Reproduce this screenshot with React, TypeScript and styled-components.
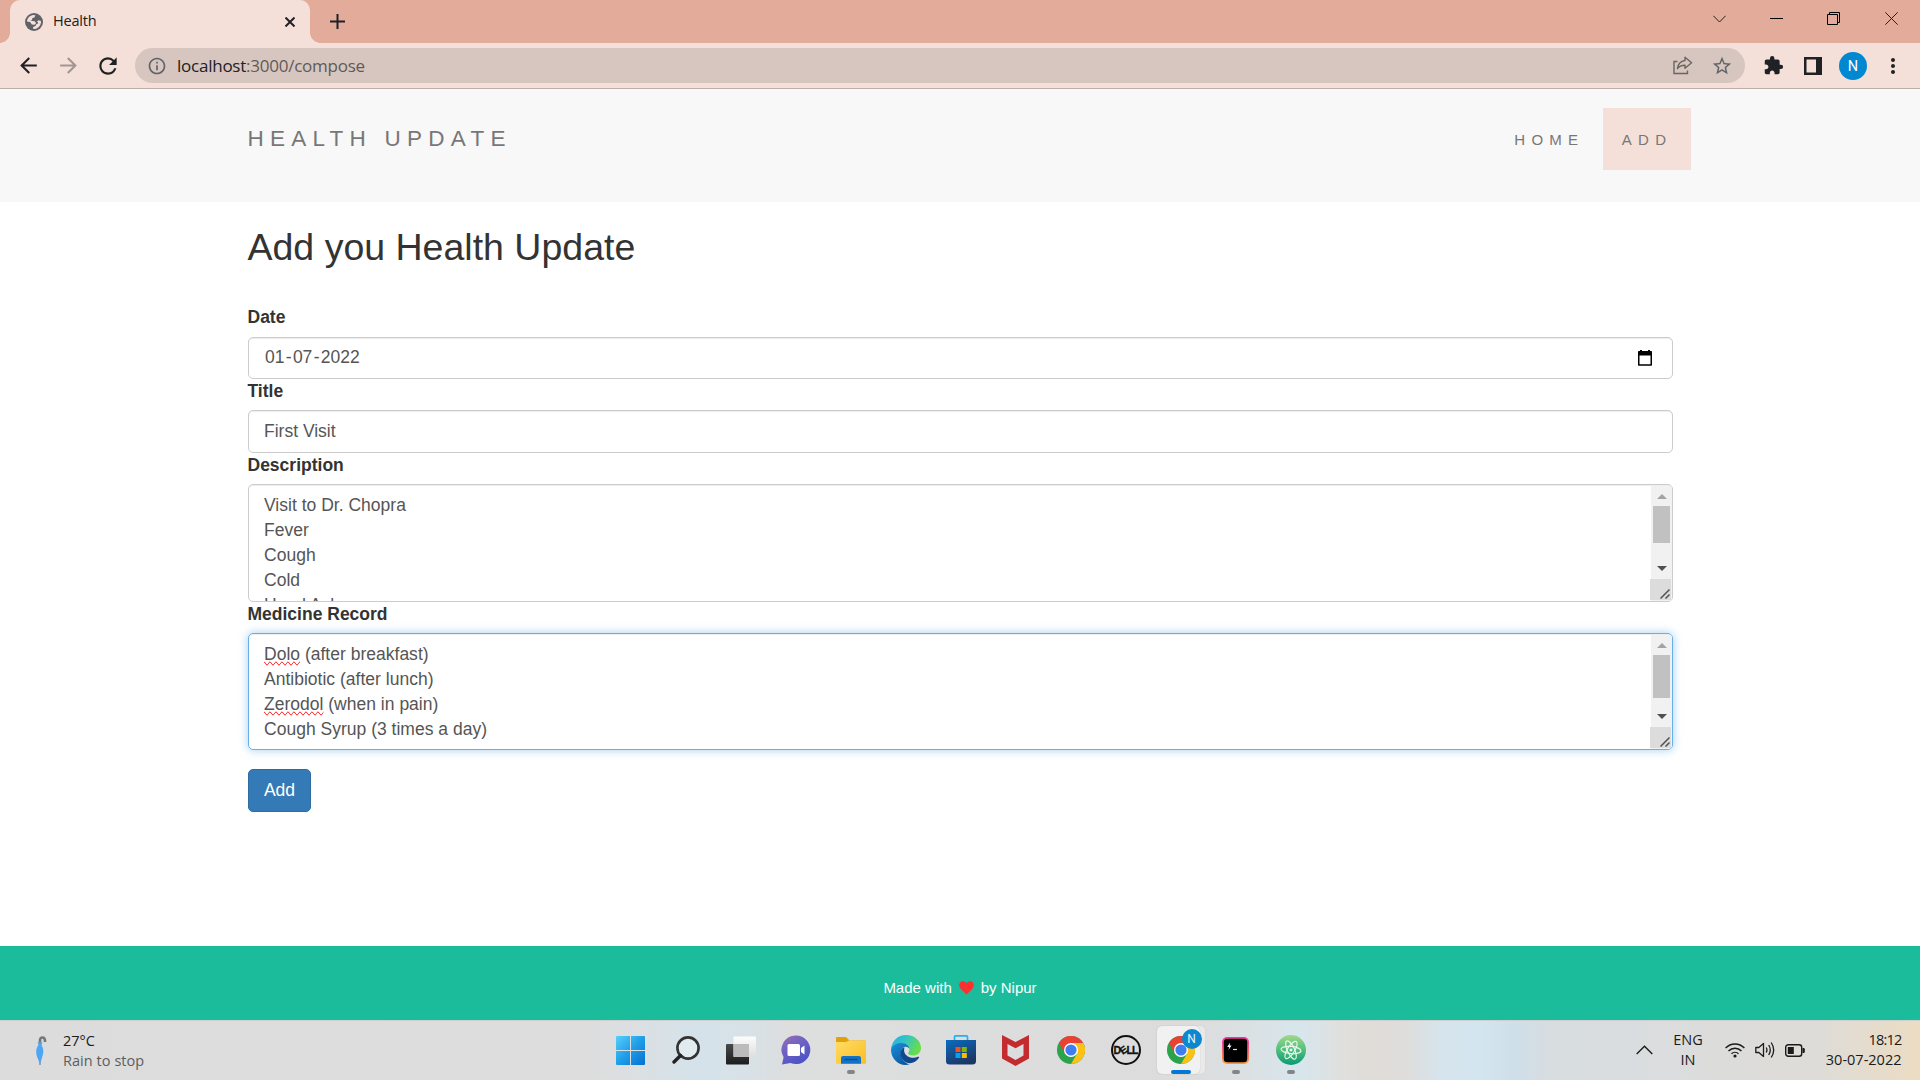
import React from "react";
import styled, { createGlobalStyle, css } from "styled-components";
import {
  MdArrowBack,
  MdArrowForward,
  MdRefresh,
  MdInfoOutline,
  MdStarBorder,
  MdExtension,
  MdMoreVert,
} from "react-icons/md";

const uiFont = '"Open Sans", "Noto Sans", sans-serif';
const pageFont = '"Liberation Sans", Arial, sans-serif';

const GlobalStyle = createGlobalStyle`
  *, *::before, *::after { box-sizing: border-box; }
  body { margin: 0; overflow: hidden; background: #fff; }
  svg { display: block; flex: none; }
`;

const Screen = styled.div`
  display: flex;
  flex-direction: column;
  width: 1920px;
  height: 1080px;
  font-family: ${uiFont};
`;

/* ---------- browser chrome ---------- */

const TabStrip = styled.header`
  display: flex;
  flex: none;
  height: 43px;
  padding-left: 10px;
  background: #e3ab99;
`;

const Tab = styled.div`
  position: relative;
  display: flex;
  align-items: center;
  width: 300px;
  padding: 0 15px 0 15px;
  border-radius: 10px 10px 0 0;
  background: #f5e0d9;
  color: #202124;
  font-size: 14.5px;
  letter-spacing: -0.2px;

  &::before,
  &::after {
    content: "";
    position: absolute;
    bottom: 0;
    width: 10px;
    height: 10px;
  }
  &::before {
    left: -10px;
    background: radial-gradient(circle at 0 0, transparent 9.5px, #f5e0d9 10px);
  }
  &::after {
    right: -10px;
    background: radial-gradient(circle at 100% 0, transparent 9.5px, #f5e0d9 10px);
  }
`;

const TabTitle = styled.span`
  flex: 1;
  margin: 0 0 2px 10px;
  line-height: 20px;
`;

const NewTab = styled.div`
  display: flex;
  align-items: center;
  padding-left: 20px;
`;

const WindowControls = styled.div`
  display: flex;
  margin-left: auto;
  height: 37px;
  align-items: center;
`;

const WindowControl = styled.div`
  display: flex;
  align-items: center;
  justify-content: center;
  width: 57.4px;
`;

const Toolbar = styled.div`
  display: flex;
  flex: none;
  align-items: center;
  height: 46px;
  padding-left: 8px;
  border-bottom: 1px solid #bdaeaa;
  background: #f5e0d9;
  color: #202124;
`;

const ToolButton = styled.div<{ $dim?: boolean }>`
  display: flex;
  flex: none;
  justify-content: center;
  align-items: center;
  width: 40px;
  color: ${(p) => (p.$dim ? "#a09593" : "#202124")};
`;

const NavButtons = styled.div`
  display: flex;
  flex: none;
  width: 127px;
`;

const AddressBar = styled.div`
  display: flex;
  flex: none;
  align-items: center;
  width: 1610px;
  height: 35px;
  padding: 0 12px 0 12px;
  border-radius: 18px;
  background: #d7c6bf;
  color: #5f6368;
`;

const Url = styled.div`
  flex: 1;
  margin-left: 10px;
  font-size: 17px;
  line-height: 24px;
  letter-spacing: -0.24px;
  color: #5f5a59;
`;

const Host = styled.span`
  color: #202124;
`;

const AddressActions = styled.div`
  display: flex;
  align-items: center;
  gap: 18px;
`;

const Extensions = styled.div`
  display: flex;
  flex: none;
  margin-left: 8px;
`;

const Avatar = styled.div`
  display: flex;
  align-items: center;
  justify-content: center;
  width: 28px;
  height: 28px;
  padding-top: 1px;
  border-radius: 50%;
  background: #0288d1;
  color: #fff;
  font: 14.5px Roboto, sans-serif;
`;

/* ---------- page ---------- */

const Page = styled.div`
  display: flex;
  flex-direction: column;
  flex: 1;
  font-family: ${pageFont};
  font-size: 17.5px;
  line-height: 25px;
  color: #333;
`;

const Navbar = styled.nav`
  display: flex;
  flex: none;
  align-items: flex-start;
  justify-content: space-between;
  height: 113px;
  padding: 19px 229px 0 247.5px;
  background: #f8f8f8;
  color: #777;
`;

const Brand = styled.div`
  padding-top: 17.5px;
  font-size: 22.5px;
  letter-spacing: 6.25px;
`;

const NavLinks = styled.div`
  display: flex;
`;

const NavLink = styled.a<{ $active?: boolean }>`
  height: 62px;
  padding: 19px 18.75px;
  font-size: 15px;
  letter-spacing: 6.25px;
  background: ${(p) => (p.$active ? "#f5e0d9" : "transparent")};
`;

const Content = styled.main`
  flex: 1;
  width: 1425px;
  margin-left: 248px;
`;

const Heading = styled.h1`
  margin: 25px 0 37px -0.5px;
  font-size: 37.5px;
  font-weight: 400;
  line-height: 41px;
`;

const Label = styled.label`
  display: block;
  height: 25px;
  margin: 0 0 6px -0.5px;
  font-weight: 700;

  &:first-of-type {
    margin-bottom: 7px;
  }
`;

const fieldFrame = css<{ $focus?: boolean }>`
  border: 1px solid ${(p) => (p.$focus ? "#66afe9" : "#ccc")};
  border-radius: 5px;
  box-shadow: ${(p) =>
    p.$focus
      ? "inset 0 1px 1px rgba(0,0,0,.075), 0 0 10px rgba(102,175,233,.6)"
      : "inset 0 1px 1px rgba(0,0,0,.075)"};
  color: #555;
`;

const Field = styled.div<{ $h: number; $focus?: boolean }>`
  ${fieldFrame}
  display: flex;
  align-items: center;
  justify-content: space-between;
  height: ${(p) => p.$h}px;
  padding: 0 20px 1px 15px;
`;

const DateParts = styled.span`
  display: flex;
  gap: 1.3px;
  padding-left: 1px;
`;

const TextArea = styled.div<{ $h: number; $focus?: boolean }>`
  ${fieldFrame}
  display: flex;
  height: ${(p) => p.$h}px;
  overflow: hidden;
`;

const Lines = styled.div`
  flex: 1;
  padding: 7.5px 15px;
  white-space: pre-line;
  letter-spacing: 0.01px;
`;

const Misspelt = styled.span`
  text-decoration: spelling-error;
`;

const ScrollBar = styled.div`
  display: flex;
  flex-direction: column;
  align-items: center;
  width: 21px;
  margin-top: 1px;
  background: #f1f1f1;
`;

const ArrowCell = styled.div<{ $h: number }>`
  display: flex;
  flex: none;
  align-items: center;
  justify-content: center;
  height: ${(p) => p.$h}px;
`;

const Thumb = styled.div<{ $h: number }>`
  width: 17px;
  height: ${(p) => p.$h}px;
  margin-bottom: auto;
  background: #c1c1c1;
`;

const ResizeCorner = styled.div`
  display: flex;
  flex: none;
  align-items: flex-end;
  justify-content: flex-end;
  width: 21px;
  height: 21px;
  margin: 0 2px 1px 0;
  padding: 0 1px 1px 0;
  background: #dcdcdc;
`;

const Submit = styled.button`
  display: block;
  width: 63px;
  height: 43px;
  margin-top: 19px;
  padding: 0 0 1px;
  border: 1px solid #2e6da4;
  border-radius: 5px;
  background: #337ab7;
  color: #fff;
  font: 17.5px ${pageFont};
`;

const Footer = styled.footer`
  display: flex;
  flex: none;
  align-items: center;
  justify-content: center;
  gap: 7px;
  height: 74px;
  padding-top: 9px;
  background: #1abc9c;
  color: #fff;
  font-size: 15px;
`;

/* ---------- taskbar ---------- */

const Taskbar = styled.div`
  display: grid;
  grid-template-columns: 603px 715px 1fr;
  flex: none;
  height: 60px;
  border-top: 1px solid #cfcfd0;
  background: linear-gradient(
    90deg,
    #dcdcdc 0,
    #dddddd 590px,
    #dbe0e3 640px,
    #d5e2ea 690px,
    #d7e2e8 740px,
    #dddede 790px,
    #dcdcdc 1190px,
    #dbe1e3 1250px,
    #d7e6ee 1300px,
    #dfe0de 1340px,
    #e0dcd7 1370px,
    #dedddb 1405px,
    #d6e4ec 1440px,
    #d3e5ef 1480px,
    #cfdfe9 1515px,
    #d8dde0 1550px,
    #dadddf 1640px,
    #dcdcdc 1700px,
    #dedcd8 1820px,
    #ecdcc3 1920px
  );
  color: #1b1b1b;
  font-size: 14.5px;
  line-height: 20px;
`;

const Weather = styled.div`
  display: flex;
  align-items: center;
  padding: 0 0 0 34px;
  gap: 15px;
`;

const Muted = styled.div`
  color: #5d5d5d;
  letter-spacing: 0.05px;
`;

const Apps = styled.div`
  display: flex;
  align-items: center;
`;

const AppCell = styled.div<{ $run?: boolean }>`
  position: relative;
  display: flex;
  align-items: center;
  justify-content: center;
  width: 55px;
  height: 59px;
  padding-bottom: 1px;

  &::after {
    content: "";
    display: ${(p) => (p.$run ? "block" : "none")};
    position: absolute;
    left: 23.5px;
    bottom: 6px;
    width: 8px;
    height: 4px;
    border-radius: 2px;
    background: #858585;
  }
`;

const ActiveTile = styled.div`
  position: relative;
  display: flex;
  align-items: center;
  width: 48px;
  height: 48px;
  border-radius: 5px;
  background: #e9e9e9;
  box-shadow: 0 0 0 1px #d9d9d9;
`;

const ActiveFront = styled.div`
  display: flex;
  align-items: center;
  width: 43.5px;
  height: 48px;
  padding-left: 10px;
  border-radius: 5px;
  background: #f1f1f1;
  box-shadow: 0 0 1px #aaa;
`;

const ProfileBadge = styled.div`
  position: absolute;
  top: 3px;
  left: 25px;
  width: 20px;
  height: 20px;
  border-radius: 50%;
  background: #0d87cf;
  color: #e8f4fb;
  font: 12px/20px Roboto, sans-serif;
  text-align: center;
`;

const ActiveMark = styled.div`
  position: absolute;
  left: 14px;
  bottom: 0;
  width: 20px;
  height: 4px;
  border-radius: 2px;
  background: #0078d4;
`;

const Tray = styled.div`
  display: flex;
  align-items: center;
  justify-content: flex-end;
  padding: 0 18.5px 1px 0;
`;

const Language = styled.div`
  width: 36px;
  margin: 0 19px 0 17px;
  text-align: center;
`;

const StatusIcons = styled.div`
  display: flex;
  align-items: center;
  gap: 10px;
`;

const Clock = styled.div`
  width: 96.5px;
  text-align: right;
  white-space: nowrap;
`;

const Time = styled.div`
  letter-spacing: -0.8px;
  padding-right: 0;
`;

const GlobeIcon = () => (
  <svg width="18" height="18" viewBox="0 0 18 18">
    <circle cx="9" cy="9" r="9" fill="#5f6368" />
    <path d="M2 8.500C2.300 5 5 2.300 8.400 2l2 .2-1 2.200-2 .6-.4 2-1.800.8 4.500.4 1.400 2-1.600 1.500-2.600-.2-1.800-2.400z" fill="#f5e0d9" />
    <path d="M12 8.500l1.500-1.200 2.500.6c.3 4-2.400 7.500-6.800 8.100l-1.200-.3.200-1.700 2.300-1 .8-1.800 2.200-.9z" fill="#f5e0d9" />
  </svg>
);

const ShareIcon = () => (
  <svg width="20" height="19" viewBox="0 0 20 19" fill="none" stroke="#6b6463" strokeWidth="1.400">
    <path d="M4.500 5.500H1v12h13.500v-3" />
    <path d="M12 1.200l6.600 5.600-6.600 5.400V9.300c-3.700-.1-5.800 1-7.600 3.400.6-4.500 3.200-7.600 7.600-8.200z" strokeLinejoin="round" />
  </svg>
);

const CalendarIcon = () => (
  <svg width="14" height="16" viewBox="0 0 14 16">
    <path d="M2 0h2v1h6V0h2v1h1.200q.8 0 .8.8V15q0 .8-.8.8H.8Q0 15.800 0 15V1.800Q0 1 .8 1H2zM1.500 5.500v8.800h11V5.500z" fill="#000" />
  </svg>
);

const ScrollArrow = ({ down }: { down?: boolean }) => (
  <svg width="10" height="5" viewBox="0 0 10 5">
    <path d={down ? "M0 0h10L5 5z" : "M0 5h10L5 0z"} fill={down ? "#505050" : "#a3a3a3"} />
  </svg>
);

const ScrollRail = ({ thumb }: { thumb: number }) => (
  <ScrollBar>
    <ArrowCell $h={20}><ScrollArrow /></ArrowCell>
    <Thumb $h={thumb} />
    <ArrowCell $h={21}><ScrollArrow down /></ArrowCell>
    <ResizeCorner>
      <svg width="10" height="10" viewBox="0 0 10 10" stroke="#505050" strokeWidth="1.500">
        <path d="M.5 9.500l9-9M5.500 9.500l4-4" />
      </svg>
    </ResizeCorner>
  </ScrollBar>
);

const ChromeIcon = () => (
  <svg width="28" height="28" viewBox="0 0 48 48">
    <circle cx="24" cy="24" r="24" fill="#2ba24c" />
    <path d="M3.200 12A24 24 0 0 1 44.800 12H24L13.600 30z" fill="#e94235" />
    <path d="M24 12H44.800A24 24 0 0 1 24 48L34.400 30z" fill="#fbc116" />
    <circle cx="24" cy="24" r="12" fill="#fff" />
    <circle cx="24" cy="24" r="9.600" fill="#3f7df0" />
  </svg>
);

const WindowsIcon = () => (
  <svg width="29" height="29" viewBox="0 0 29 29">
    <defs>
      <linearGradient id="win" x1="0" y1="0" x2="1" y2="1">
        <stop offset="0" stopColor="#55d0fb" />
        <stop offset=".5" stopColor="#1f9ee8" />
        <stop offset="1" stopColor="#0670cf" />
      </linearGradient>
    </defs>
    <path d="M1 0h13v14H0V1q0-1 1-1zM15 0h13q1 0 1 1v13H15zM0 15h14v14H1q-1 0-1-1zM15 15h14v13q0 1-1 1H15z" fill="url(#win)" />
  </svg>
);

const SearchIcon = () => (
  <svg width="28" height="28" viewBox="0 0 28 28" fill="none">
    <circle cx="16" cy="12" r="10.600" fill="#ffffff" fillOpacity=".3" stroke="#333" strokeWidth="2.600" />
    <path d="M8.500 19.500L2 26" stroke="#222" strokeWidth="3.400" strokeLinecap="round" />
  </svg>
);

const TaskViewIcon = () => (
  <svg width="30" height="29" viewBox="0 0 30 29">
    <defs>
      <linearGradient id="tv" x1="0" y1="0" x2="0" y2="1">
        <stop offset="0" stopColor="#4a4a4a" />
        <stop offset="1" stopColor="#1c1c1c" />
      </linearGradient>
      <linearGradient id="tvw" x1="0" y1="0" x2="0" y2="1">
        <stop offset="0" stopColor="#fdfdfd" />
        <stop offset="1" stopColor="#dedede" />
      </linearGradient>
    </defs>
    <rect x="0" y="8" width="23" height="20.500" rx="1" fill="url(#tv)" />
    <rect x="7.500" y=".5" width="22.500" height="20.500" rx="1" fill="url(#tvw)" />
    <rect x="7.500" y="8" width="15.500" height="13" fill="#bcbcbc" />
  </svg>
);

const ChatIcon = () => (
  <svg width="30" height="30" viewBox="0 0 30 30">
    <defs>
      <linearGradient id="chat" x1="0" y1="0" x2=".6" y2="1">
        <stop offset="0" stopColor="#9a6eb4" />
        <stop offset=".5" stopColor="#6c61c4" />
        <stop offset="1" stopColor="#4b52c4" />
      </linearGradient>
    </defs>
    <path d="M15 .5a14.300 14.300 0 1 1-5.500 27.500L1 29.500l1.600-7.200A14.300 14.300 0 0 1 15 .5z" fill="url(#chat)" />
    <rect x="6.500" y="9" width="12.500" height="12" rx="1.500" fill="#fff" />
    <path d="M20 13l3.500-2.500v9L20 17z" fill="#fff" />
  </svg>
);

const ExplorerIcon = () => (
  <svg width="30" height="27" viewBox="0 0 30 27">
    <defs>
      <linearGradient id="fold" x1="0" y1="0" x2="1" y2="1">
        <stop offset="0" stopColor="#ffdc66" />
        <stop offset="1" stopColor="#fbbd20" />
      </linearGradient>
    </defs>
    <path d="M0 1q0-1 1-1h9l3.500 3.500H29q1 0 1 1V9H0z" fill="#e3a008" />
    <path d="M0 5h10l3-1.500h16q1 0 1 1V26q0 .8-1 .8H1q-1 0-1-.8z" fill="url(#fold)" />
    <path d="M5 26.800V21q0-2 2-2h16q2 0 2 2v5.800z" fill="#1273c6" />
    <path d="M9 22.500h12" stroke="#0a4f94" strokeWidth="1.500" strokeLinecap="round" />
  </svg>
);

const EdgeIcon = () => (
  <svg width="30" height="30" viewBox="0 0 30 30">
    <defs>
      <linearGradient id="e1" x1="0" y1="0" x2="1" y2=".4">
        <stop offset="0" stopColor="#28a9e8" />
        <stop offset=".5" stopColor="#32c5c3" />
        <stop offset="1" stopColor="#67dd4c" />
      </linearGradient>
      <linearGradient id="e2" x1="0" y1="0" x2=".6" y2="1">
        <stop offset="0" stopColor="#1890dc" />
        <stop offset="1" stopColor="#0c59a4" />
      </linearGradient>
    </defs>
    <path d="M0 14.500C.5 6 7 0 15 0c9 0 15 6 15 13 0 5-4 7.500-8 7.500-3 0-5-1-5-2.200 0-.8 1.500-1.600 1.500-4C18.500 11 15.500 8.500 11 8.500 5 8.500 1 11.500 0 14.500z" fill="url(#e1)" />
    <path d="M0 14.500C1 10.500 5.500 8 10.500 8c5 0 8 3 8 6.500-1-3-4.500-3.500-6.500-1.500-5 5-1 14.500 6.500 16.500C8 32 0 24 0 14.500z" fill="url(#e2)" />
    <path d="M12 13c-4 3.500-3 9 .5 12.500 4.500 4.500 12 3 15.500-2.800.5-.8-.3-1.300-1-.9-5 2.500-12 .2-13.500-4.300-.6-1.800-.5-3.500 0-5z" fill="#11478c" />
  </svg>
);

const StoreIcon = () => (
  <svg width="30" height="30" viewBox="0 0 30 30">
    <defs>
      <linearGradient id="store" x1="0" y1="0" x2=".5" y2="1">
        <stop offset="0" stopColor="#0b6cc0" />
        <stop offset="1" stopColor="#1c3765" />
      </linearGradient>
    </defs>
    <path d="M8.500 6V2q0-1.200 1.200-1.200h10.600q1.200 0 1.200 1.200v4" fill="none" stroke="#27b0f0" strokeWidth="1.700" />
    <path d="M0 5h30v21q0 3.500-3.500 3.500h-23Q0 29.500 0 26z" fill="url(#store)" />
    <path d="M9.500 12h5v5h-5z" fill="#f25022" />
    <path d="M15.800 12h5v5h-5z" fill="#7fba00" />
    <path d="M9.500 18h5v5h-5z" fill="#00a4ef" />
    <path d="M15.800 18h5v5h-5z" fill="#ffb900" />
  </svg>
);

const McAfeeIcon = () => (
  <svg width="27" height="31" viewBox="0 0 27 31">
    <path d="M0 0l13.500 7L27 0v23.500L13.500 31 0 23.500zM5.500 9v11.500l8 4.500 8-4.500V9l-8 4.200z" fill="#c42b2f" fillRule="evenodd" />
  </svg>
);

const DellRing = styled.div`
  display: flex;
  align-items: center;
  justify-content: center;
  width: 30px;
  height: 30px;
  border: 2px solid #111;
  border-radius: 50%;
  color: #111;
  font: 700 10.5px/30px ${pageFont};
  letter-spacing: -0.9px;
  -webkit-text-stroke: 0.3px #111;
`;

const SlantedE = styled.span`
  display: inline-block;
  transform: rotate(-35deg);
`;

const DellIcon = () => (
  <DellRing>
    <span>D</span>
    <SlantedE>E</SlantedE>
    <span>LL</span>
  </DellRing>
);

const HyperIcon = () => (
  <svg width="27" height="27" viewBox="0 0 27 27">
    <defs>
      <linearGradient id="hyper" x1="0" y1="0" x2="0" y2="1">
        <stop offset="0" stopColor="#f531a8" />
        <stop offset="1" stopColor="#fb9a3c" />
      </linearGradient>
    </defs>
    <rect width="27" height="27" rx="5" fill="url(#hyper)" />
    <rect x="1.800" y="1.800" width="23.400" height="23.400" rx="3.500" fill="#000" />
    <path d="M8 5.500L5.200 10h2l-.7 3 3-4.500H7.600z" fill="#fff" />
    <path d="M11 12.500h4" stroke="#ddd" strokeWidth="1.200" />
  </svg>
);

const AtomIcon = () => (
  <svg width="30" height="30" viewBox="0 0 30 30">
    <defs>
      <linearGradient id="atom" x1="0" y1="0" x2="0" y2="1">
        <stop offset="0" stopColor="#a3d888" />
        <stop offset=".5" stopColor="#4fbf7d" />
        <stop offset="1" stopColor="#0a9a72" />
      </linearGradient>
    </defs>
    <circle cx="15" cy="15" r="15" fill="url(#atom)" />
    <g fill="none" stroke="#e6f7ec" strokeWidth="1.200">
      <ellipse cx="15" cy="15" rx="10" ry="3.600" transform="rotate(5 15 15)" />
      <ellipse cx="15" cy="15" rx="10" ry="3.600" transform="rotate(65 15 15)" />
      <ellipse cx="15" cy="15" rx="10" ry="3.600" transform="rotate(-58 15 15)" />
    </g>
    <circle cx="15" cy="15" r="1.500" fill="#e6f7ec" />
  </svg>
);

const UmbrellaIcon = () => (
  <svg width="14" height="29" viewBox="0 0 14 29">
    <path d="M6 8V4.500Q6 1.500 8.500 1.500T11 5v1" fill="none" stroke="#777" strokeWidth="2.600" />
    <path d="M3.500 6.500h5l-1 2.500q2.500 4 1.500 9L6.500 27h-1L2.800 20Q1 13 4.500 9z" fill="#4ba6f5" />
    <path d="M5.500 26.500h1V29h-1z" fill="#666" />
  </svg>
);

const WifiIcon = () => (
  <svg width="20" height="16" viewBox="0 0 20 16" fill="none" stroke="#1b1b1b" strokeWidth="1.400">
    <path d="M.6 6a13 13 0 0 1 18.800 0M3.500 9a9 9 0 0 1 13 0M6.500 11.800a5 5 0 0 1 7 0" />
    <circle cx="10" cy="14" r="1.600" fill="#1b1b1b" stroke="none" />
  </svg>
);

const SpeakerIcon = () => (
  <svg width="20" height="18" viewBox="0 0 20 18" fill="none" stroke="#1b1b1b" strokeWidth="1.300">
    <path d="M.8 6.500h3L8.500 2.500v13l-4.700-4h-3z" strokeLinejoin="round" />
    <path d="M11.200 6.500q1.500 2.500 0 5M13.700 4q3.200 5 0 10M16.200 1.500q5 7.500 0 15" />
  </svg>
);

const BatteryIcon = () => (
  <svg width="20" height="13" viewBox="0 0 20 13">
    <rect x=".7" y=".7" width="16" height="11.600" rx="2.500" fill="none" stroke="#1b1b1b" strokeWidth="1.400" />
    <rect x="2.800" y="3" width="6" height="7" fill="#1b1b1b" />
    <path d="M17.500 4h1q1.300 0 1.300 1.300v2.400Q19.800 9 18.500 9h-1z" fill="#1b1b1b" />
  </svg>
);

export default function App() {
  return (
    <Screen>
      <GlobalStyle />
      <TabStrip>
        <Tab>
          <GlobeIcon />
          <TabTitle>Health</TabTitle>
          <svg width="10" height="10" viewBox="0 0 10 10" stroke="#202124" strokeWidth="2">
            <path d="M.5.5l9 9M9.500.5l-9 9" />
          </svg>
        </Tab>
        <NewTab>
          <svg width="15" height="15" viewBox="0 0 15 15" stroke="#202124" strokeWidth="2">
            <path d="M7.500 0v15M0 7.500h15" />
          </svg>
        </NewTab>
        <WindowControls>
          <WindowControl>
            <svg width="13" height="8" viewBox="0 0 13 8" fill="none" stroke="#2b201d">
              <path d="M.3.700l6.200 6.300L12.700.7" />
            </svg>
          </WindowControl>
          <WindowControl>
            <svg width="13" height="1" viewBox="0 0 13 1"><path d="M0 0h13v1H0z" /></svg>
          </WindowControl>
          <WindowControl>
            <svg width="13" height="13" viewBox="0 0 13 13" fill="none" stroke="#000">
              <path d="M.5 2.500h10v10H.5zM2.500 2.500v-2h10v10h-2" />
            </svg>
          </WindowControl>
          <WindowControl>
            <svg width="13" height="13" viewBox="0 0 13 13" stroke="#2b201d">
              <path d="M.3.300l12.400 12.400M12.700.3L.3 12.700" />
            </svg>
          </WindowControl>
        </WindowControls>
      </TabStrip>
      <Toolbar>
        <NavButtons>
          <ToolButton><MdArrowBack size={25} /></ToolButton>
          <ToolButton $dim><MdArrowForward size={25} /></ToolButton>
          <ToolButton><MdRefresh size={26} /></ToolButton>
        </NavButtons>
        <AddressBar>
          <MdInfoOutline size={20} />
          <Url><Host>localhost</Host>:3000/compose</Url>
          <AddressActions>
            <ShareIcon />
            <MdStarBorder size={22} />
          </AddressActions>
        </AddressBar>
        <Extensions>
          <ToolButton><MdExtension size={21} /></ToolButton>
          <ToolButton>
            <svg width="18" height="18" viewBox="0 0 18 18">
              <path d="M0 0h18v18H0zM2.500 2.500v13h9.500v-13z" fill="#202124" fillRule="evenodd" />
            </svg>
          </ToolButton>
          <ToolButton><Avatar>N</Avatar></ToolButton>
          <ToolButton><MdMoreVert size={24} /></ToolButton>
        </Extensions>
      </Toolbar>

      <Page>
        <Navbar>
          <Brand>HEALTH UPDATE</Brand>
          <NavLinks>
            <NavLink>HOME</NavLink>
            <NavLink $active>ADD</NavLink>
          </NavLinks>
        </Navbar>
        <Content>
          <Heading>Add you Health Update</Heading>
          <Label>Date</Label>
          <Field $h={42}>
            <DateParts>
              <span>01</span><span>-</span><span>07</span><span>-</span><span>2022</span>
            </DateParts>
            <CalendarIcon />
          </Field>
          <Label>Title</Label>
          <Field $h={43}>First Visit</Field>
          <Label>Description</Label>
          <TextArea $h={118}>
            <Lines>{"Visit to Dr. Chopra\nFever\nCough\nCold\nHead Ache"}</Lines>
            <ScrollRail thumb={37} />
          </TextArea>
          <Label>Medicine Record</Label>
          <TextArea $h={117} $focus>
            <Lines>
              <Misspelt>Dolo</Misspelt>{" (after breakfast)\nAntibiotic (after lunch)\n"}
              <Misspelt>Zerodol</Misspelt>{" (when in pain)\nCough Syrup (3 times a day)"}
            </Lines>
            <ScrollRail thumb={43} />
          </TextArea>
          <Submit>Add</Submit>
        </Content>
        <Footer>
          <span>Made with</span>
          <svg width="15" height="14" viewBox="0 0 15 14">
            <path d="M7.500 13.500L1.300 7.400C-.6 5.300-.1.300 4 .3c1.600 0 2.800.8 3.500 2.100C8.200 1.100 9.400.3 11 .3c4.100 0 4.600 5 2.700 7.100z" fill="#fd2f2f" />
          </svg>
          <span>by Nipur</span>
        </Footer>
      </Page>

      <Taskbar>
        <Weather>
          <UmbrellaIcon />
          <div>
            <div>27°C</div>
            <Muted>Rain to stop</Muted>
          </div>
        </Weather>
        <Apps>
          <AppCell><WindowsIcon /></AppCell>
          <AppCell><SearchIcon /></AppCell>
          <AppCell><TaskViewIcon /></AppCell>
          <AppCell><ChatIcon /></AppCell>
          <AppCell $run><ExplorerIcon /></AppCell>
          <AppCell><EdgeIcon /></AppCell>
          <AppCell><StoreIcon /></AppCell>
          <AppCell><McAfeeIcon /></AppCell>
          <AppCell><ChromeIcon /></AppCell>
          <AppCell><DellIcon /></AppCell>
          <AppCell>
            <ActiveTile>
              <ActiveFront><ChromeIcon /></ActiveFront>
              <ProfileBadge>N</ProfileBadge>
              <ActiveMark />
            </ActiveTile>
          </AppCell>
          <AppCell $run><HyperIcon /></AppCell>
          <AppCell $run><AtomIcon /></AppCell>
        </Apps>
        <Tray>
          <svg width="17" height="10" viewBox="0 0 17 10" fill="none" stroke="#1b1b1b" strokeWidth="1.400">
            <path d="M.7 9l7.800-7.800L16.300 9" />
          </svg>
          <Language>ENG<br />IN</Language>
          <StatusIcons>
            <WifiIcon />
            <SpeakerIcon />
            <BatteryIcon />
          </StatusIcons>
          <Clock>
            <Time>18:12</Time>
            <div>30-07-2022</div>
          </Clock>
        </Tray>
      </Taskbar>
    </Screen>
  );
}
